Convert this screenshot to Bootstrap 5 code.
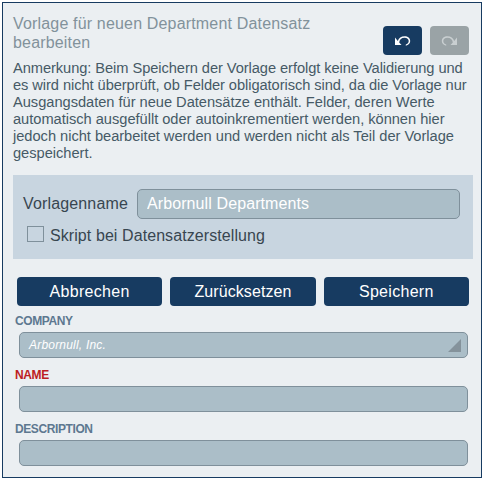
<!DOCTYPE html>
<html lang="de">
<head>
<meta charset="utf-8">
<meta name="viewport" content="width=device-width, initial-scale=1">
<title>Vorlage bearbeiten</title>
<link href="https://cdn.jsdelivr.net/npm/bootstrap@5.3.0/dist/css/bootstrap.min.css" rel="stylesheet">
<style>
body { font-family: "Liberation Sans", Arial, sans-serif; background: #fff; color: #384650; padding: 2px; height: 480px; overflow: hidden; }
.panel { width: 480px; height: 476px; border: 1px solid #173b61; background: #ebeff2; padding: 11px 8px 0 10px; }
.heading-row { height: 43px; }
.panel-title { font-size: 16px; line-height: 19px; letter-spacing: .17px; color: #82929b; white-space: nowrap; }
.note { font-size: 14.67px; line-height: 17px; letter-spacing: -.07px; color: #465a66; white-space: nowrap; height: 102px; margin-top: 3px; }
.note .loose { letter-spacing: -.03px; }
.btn-navy { --bs-btn-bg: #173b61; --bs-btn-color: #fff; --bs-btn-hover-bg: #1f4b79; --bs-btn-hover-color: #fff; --bs-btn-disabled-bg: #9aa3a6; --bs-btn-disabled-color: #c9cfd1; --bs-btn-disabled-opacity: 1; border: 0; border-radius: 4px; height: 29px; padding: 0; font-size: 16px; line-height: 29px; }
.btn-tool { width: 39px; }
.tool-group { gap: 8px; margin: 12px 4px 0 0; }
.template-box { width: 460px; height: 84px; background: #c8d5e0; margin-top: 13px; padding: 14px 13px 0 10px; font-size: 16px; letter-spacing: .08px; }
.form-control { background: #abbec8; border: 1px solid #7f909b; border-radius: 5px; color: #fff; padding: 0 9px; }
.form-control:focus { background: #abbec8; color: #fff; box-shadow: none; }
.name-input { width: 323px; height: 30px; font-size: 16px; letter-spacing: .1px; }
.form-check-input { width: 17px; height: 16px; margin: 0; border: 1px solid #7f909b; border-radius: 0 !important; background-color: #c8d5e0; }
.check-row { margin: 3px 0 0 4px; gap: 6px; height: 24px; }
.check-row label { padding-top: 4px; }
.template-label { letter-spacing: .15px; }
.actions { gap: 8px; margin: 18px 4px 0 4px; }
.actions .btn { letter-spacing: .3px; }
.actions .btn-reset { letter-spacing: .08px; }
.field-label { display: block; font-size: 12px; line-height: 14px; font-weight: bold; letter-spacing: -.4px; color: #5d7890; margin: 10px 0 4px 2px; }
.actions + .field-label { margin-top: 8px; }
.field-label.required { color: #bd1c22; }
.field-box { width: 449px; height: 26px; margin-left: 6px; font-size: 12px; line-height: 24px; letter-spacing: .2px; }
.field-box.form-control { padding-right: 6px; }
</style>
</head>
<body>
<main class="panel">
  <div class="heading-row d-flex justify-content-between">
    <h1 class="panel-title fw-normal m-0">Vorlage für neuen Department Datensatz<br>bearbeiten</h1>
    <div class="tool-group d-flex">
      <button class="btn btn-navy btn-tool d-flex align-items-center justify-content-center" aria-label="Rückgängig">
        <svg width="17" height="12" viewBox="0 0 17 12"><path d="M1 2.500v7.500h6.500L5.200 7.600C5.400 4.600 7.600 2.700 10.500 2.700c2.700 0 4.200 1.300 4.200 3.300 0 1.800-1.200 3-2.900 3.400v1.300c2.600-.5 4.400-2.200 4.400-4.700 0-2.900-2.300-4.700-5.700-4.700C7.200 1.300 4.700 2.900 3.800 6z" fill="currentColor"/></svg>
      </button>
      <button class="btn btn-navy btn-tool d-flex align-items-center justify-content-center" aria-label="Wiederholen" disabled>
        <svg width="17" height="12" viewBox="0 0 17 12"><path transform="matrix(-1 0 0 1 17 0)" d="M1 2.500v7.500h6.500L5.200 7.600C5.400 4.600 7.600 2.700 10.500 2.700c2.700 0 4.200 1.300 4.200 3.300 0 1.800-1.200 3-2.900 3.400v1.300c2.600-.5 4.400-2.200 4.400-4.700 0-2.900-2.300-4.700-5.700-4.700C7.200 1.300 4.700 2.900 3.800 6z" fill="currentColor"/></svg>
      </button>
    </div>
  </div>
  <p class="note mb-0">Anmerkung: Beim Speichern der Vorlage erfolgt keine Validierung und<br>es wird nicht überprüft, ob Felder obligatorisch sind, da die Vorlage nur<br><span class="loose">Ausgangsdaten für neue Datensätze enthält. Felder, deren Werte<br>automatisch ausgefüllt oder autoinkrementiert werden, können hier<br>jedoch nicht bearbeitet werden und werden nicht als Teil der Vorlage<br>gespeichert.</span></p>
  <section class="template-box">
    <div class="d-flex align-items-center justify-content-between">
      <label class="template-label" for="tpl">Vorlagenname</label>
      <input id="tpl" class="form-control name-input" value="Arbornull Departments">
    </div>
    <div class="check-row d-flex align-items-center">
      <input id="script" type="checkbox" class="form-check-input">
      <label for="script">Skript bei Datensatzerstellung</label>
    </div>
  </section>
  <div class="actions d-flex">
    <button class="btn btn-navy flex-fill w-100">Abbrechen</button>
    <button class="btn btn-navy btn-reset flex-fill w-100">Zurücksetzen</button>
    <button class="btn btn-navy flex-fill w-100">Speichern</button>
  </div>
  <span class="field-label">COMPANY</span>
  <div class="form-control field-box d-flex align-items-center justify-content-between fst-italic" role="combobox">
    <span>Arbornull, Inc.</span>
    <svg width="13" height="13" viewBox="0 0 13 13"><path d="M13 0v13H0z" fill="#84929b"/></svg>
  </div>
  <label class="field-label required" for="name">NAME</label>
  <input id="name" class="form-control field-box">
  <label class="field-label" for="desc">DESCRIPTION</label>
  <input id="desc" class="form-control field-box">
</main>
<script src="https://cdn.jsdelivr.net/npm/bootstrap@5.3.0/dist/js/bootstrap.bundle.min.js"></script>
</body>
</html>
